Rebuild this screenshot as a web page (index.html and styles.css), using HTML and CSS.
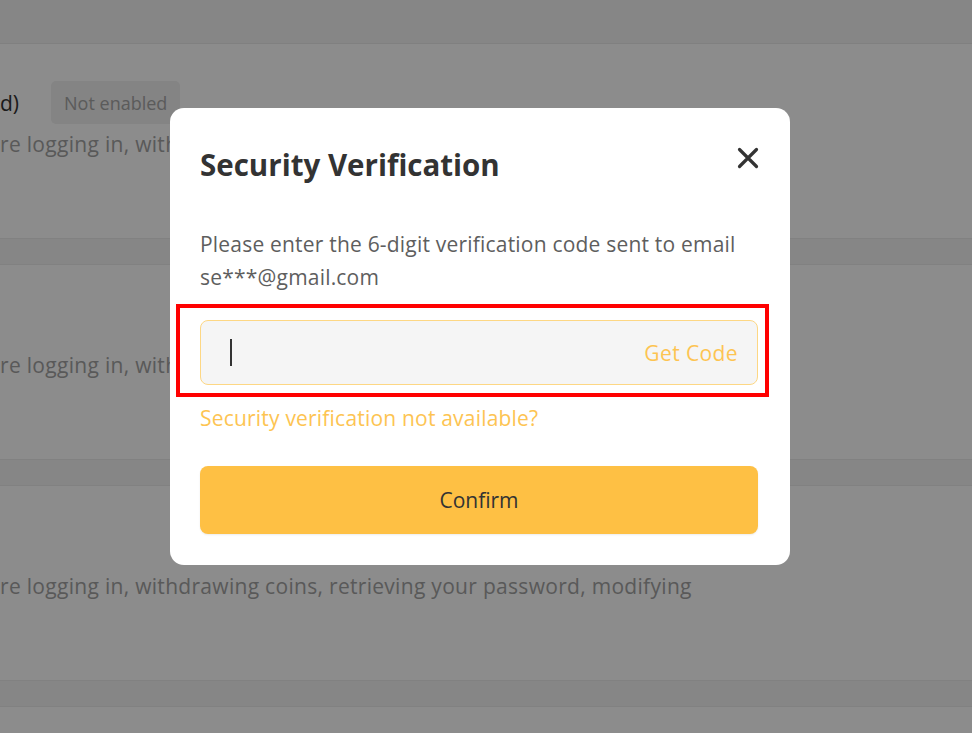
FILE: index.html
```html
<!DOCTYPE html>
<html lang="en">
<head>
<meta charset="utf-8">
<title>Security Verification</title>
<link rel="stylesheet" href="styles.css">
</head>
<body>
<div class="page">
  <div class="topbar"></div>
  <section class="item">
    <div class="item-head">
      <span class="item-title">d)</span>
      <span class="chip">Not enabled</span>
    </div>
    <p class="item-desc">re logging in, withdrawing coins, retrieving your password, modifying</p>
  </section>
  <div class="sep"></div>
  <section class="item">
    <div class="item-head"></div>
    <p class="item-desc">re logging in, withdrawing coins, retrieving your password, modifying</p>
  </section>
  <div class="sep"></div>
  <section class="item">
    <div class="item-head"></div>
    <p class="item-desc">re logging in, withdrawing coins, retrieving your password, modifying</p>
  </section>
  <div class="sep"></div>
  <section class="item item-last"></section>
</div>

<div class="overlay">
  <div class="modal">
    <div class="modal-head">
      <h2 class="modal-title">Security Verification</h2>
      <button class="close" aria-label="Close">
        <svg width="24" height="24" viewBox="0 0 24 24"><path d="M3.5 3.5 L20.5 20.5 M20.5 3.5 L3.5 20.5" stroke="#333" stroke-width="3.2" stroke-linecap="round" fill="none"/></svg>
      </button>
    </div>
    <p class="modal-desc">Please enter the 6-digit verification code sent to email se***@gmail.com</p>
    <div class="field">
      <span class="caret"></span>
      <span class="get-code">Get Code</span>
      <span class="highlight"></span>
    </div>
    <a class="help-link" href="#">Security verification not available?</a>
    <button class="confirm">Confirm</button>
  </div>
</div>
</body>
</html>
```
FILE: styles.css
```css
* { box-sizing: border-box; }
html, body { margin: 0; padding: 0; }
body {
  width: 972px;
  height: 733px;
  overflow: hidden;
  background: #ffffff;
  font-family: "Open Sans", "Noto Sans", sans-serif;
}
.page {
  display: flex;
  flex-direction: column;
  height: 733px;
}
.topbar {
  height: 44px;
  flex: none;
  background: #f5f5f5;
  border-bottom: 1px solid #e9e9e9;
}
.item {
  height: 194px;
  flex: none;
  display: flex;
  flex-direction: column;
  padding-top: 37px;
}
.item-last {
  height: auto;
  flex: 1;
  padding: 0;
}
.item-head {
  height: 43px;
  display: flex;
  align-items: center;
  gap: 32px;
}
.item-title {
  font-size: 21px;
  color: #333;
}
.chip {
  height: 43px;
  padding: 0 13px;
  display: flex;
  align-items: center;
  background: #f0f0f0;
  border-radius: 5px;
  color: #a6a6a6;
  font-size: 18px;
}
.item-desc {
  margin: 6px 0 0;
  font-size: 21px;
  letter-spacing: 0.3px;
  line-height: 28px;
  color: #a3a3a3;
  white-space: nowrap;
}
.sep {
  height: 27px;
  flex: none;
  background: #f5f5f5;
  border-top: 1px solid #ececec;
  border-bottom: 1px solid #ececec;
}
.overlay {
  position: fixed;
  inset: 0;
  background: rgba(0, 0, 0, 0.45);
  display: flex;
  align-items: flex-start;
  padding: 108px 0 0 170px;
}
.modal {
  width: 620px;
  height: 457px;
  background: #fff;
  border-radius: 14px;
  padding: 39px 30px 0 30px;
  display: flex;
  flex-direction: column;
}
.modal-head {
  display: flex;
  align-items: center;
  justify-content: space-between;
  height: 36px;
}
.modal-title {
  margin: 0;
  font-size: 29.5px;
  font-weight: 700;
  color: #333;
  line-height: 36px;
}
.close {
  border: 0;
  background: none;
  padding: 0;
  margin: -15px 0 0 0;
  width: 24px;
  height: 24px;
  display: flex;
  align-items: center;
  justify-content: center;
  cursor: pointer;
}
.modal-desc {
  margin: 45px 0 0;
  font-size: 21px;
  letter-spacing: 0.2px;
  line-height: 33px;
  color: #5e5e5e;
  padding-right: 10px;
}
.field {
  position: relative;
  margin-top: 26px;
  margin-right: 2px;
  height: 65px;
  background: #f5f5f5;
  border: 1px solid #fdd784;
  border-radius: 8px;
  display: flex;
  align-items: center;
  justify-content: space-between;
  padding: 0 19px 0 29px;
}
.caret {
  width: 2px;
  height: 27px;
  background: #333;
}
.get-code {
  font-size: 21px;
  letter-spacing: 0.4px;
  color: #fdc452;
}
.highlight {
  position: absolute;
  left: -25px;
  right: -12px;
  top: -17px;
  bottom: -13px;
  border: 4px solid #ff0000;
  pointer-events: none;
}
.help-link {
  margin-top: 18px;
  font-size: 21px;
  letter-spacing: 0.2px;
  line-height: 30px;
  color: #fdc452;
  text-decoration: none;
}
.confirm {
  margin-top: 33px;
  margin-right: 2px;
  height: 68px;
  border: 0;
  border-radius: 8px;
  background: #fec044;
  color: #333;
  font-family: inherit;
  font-size: 21px;
  box-shadow: 0 1px 2px rgba(0,0,0,0.08);
  cursor: pointer;
}
```
